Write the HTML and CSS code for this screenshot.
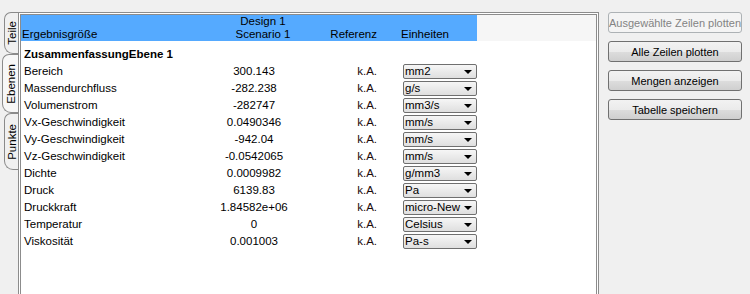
FILE: index.html
```html
<!DOCTYPE html>
<html lang="de">
<head>
    <meta charset="UTF-8">
    <title>Ergebnistabelle</title>
    <link rel="stylesheet" href="styles.css">
</head>
<body>
    <div class="window">
        <!-- Seitliche Reiter -->
        <div class="side-tabs">
            <div class="side-tab tab-teile"><span>Teile</span></div>
            <div class="side-tab tab-ebenen active"><span>Ebenen</span></div>
            <div class="side-tab tab-punkte"><span>Punkte</span></div>
        </div>

        <div class="results">
            <div class="results-head">
                <div class="col-name">Ergebnisgröße</div>
                <div class="col-value">Design 1<br>Scenario 1</div>
                <div class="col-ref">Referenz</div>
                <div class="col-unit">Einheiten</div>
            </div>

            <div class="results-body">
                <div class="row group"><div class="col-name">ZusammenfassungEbene 1</div></div>

                <div class="row">
                    <div class="col-name">Bereich</div>
                    <div class="col-value">300.143</div>
                    <div class="col-ref">k.A.</div>
                    <div class="col-unit"><div class="unit-select"><span>mm2</span><i></i></div></div>
                </div>
                <div class="row">
                    <div class="col-name">Massendurchfluss</div>
                    <div class="col-value">-282.238</div>
                    <div class="col-ref">k.A.</div>
                    <div class="col-unit"><div class="unit-select"><span>g/s</span><i></i></div></div>
                </div>
                <div class="row">
                    <div class="col-name">Volumenstrom</div>
                    <div class="col-value">-282747</div>
                    <div class="col-ref">k.A.</div>
                    <div class="col-unit"><div class="unit-select"><span>mm3/s</span><i></i></div></div>
                </div>
                <div class="row">
                    <div class="col-name">Vx-Geschwindigkeit</div>
                    <div class="col-value">0.0490346</div>
                    <div class="col-ref">k.A.</div>
                    <div class="col-unit"><div class="unit-select"><span>mm/s</span><i></i></div></div>
                </div>
                <div class="row">
                    <div class="col-name">Vy-Geschwindigkeit</div>
                    <div class="col-value">-942.04</div>
                    <div class="col-ref">k.A.</div>
                    <div class="col-unit"><div class="unit-select"><span>mm/s</span><i></i></div></div>
                </div>
                <div class="row">
                    <div class="col-name">Vz-Geschwindigkeit</div>
                    <div class="col-value">-0.0542065</div>
                    <div class="col-ref">k.A.</div>
                    <div class="col-unit"><div class="unit-select"><span>mm/s</span><i></i></div></div>
                </div>
                <div class="row">
                    <div class="col-name">Dichte</div>
                    <div class="col-value">0.0009982</div>
                    <div class="col-ref">k.A.</div>
                    <div class="col-unit"><div class="unit-select"><span>g/mm3</span><i></i></div></div>
                </div>
                <div class="row">
                    <div class="col-name">Druck</div>
                    <div class="col-value">6139.83</div>
                    <div class="col-ref">k.A.</div>
                    <div class="col-unit"><div class="unit-select"><span>Pa</span><i></i></div></div>
                </div>
                <div class="row">
                    <div class="col-name">Druckkraft</div>
                    <div class="col-value">1.84582e+06</div>
                    <div class="col-ref">k.A.</div>
                    <div class="col-unit"><div class="unit-select"><span>micro-New</span><i></i></div></div>
                </div>
                <div class="row">
                    <div class="col-name">Temperatur</div>
                    <div class="col-value">0</div>
                    <div class="col-ref">k.A.</div>
                    <div class="col-unit"><div class="unit-select"><span>Celsius</span><i></i></div></div>
                </div>
                <div class="row">
                    <div class="col-name">Viskosität</div>
                    <div class="col-value">0.001003</div>
                    <div class="col-ref">k.A.</div>
                    <div class="col-unit"><div class="unit-select"><span>Pa-s</span><i></i></div></div>
                </div>
            </div>
        </div>

        <div class="actions">
            <button class="btn" disabled>Ausgewählte Zeilen plotten</button>
            <button class="btn">Alle Zeilen plotten</button>
            <button class="btn">Mengen anzeigen</button>
            <button class="btn">Tabelle speichern</button>
        </div>
    </div>
</body>
</html>
```

FILE: styles.css
```css
body {
    margin: 0;
    background: #f0f0f0;
    font-family: "Liberation Sans", Arial, sans-serif;
    font-size: 11.5px;
    color: #000;
    overflow: hidden;
}

.window {
    box-sizing: border-box;
    height: 294px;
    overflow: hidden;
    display: flex;
    align-items: flex-start;
    padding: 12px 0 0 2px;
}

/* Reiter links */
.side-tabs {
    width: 16px;
    display: flex;
    flex-direction: column;
}

.side-tab {
    box-sizing: border-box;
    margin-left: 2px;
    border: 1px solid #8a8a8a;
    border-right: none;
    border-radius: 7px 0 0 9px;
    background: #f0f0f0;
    display: flex;
    align-items: center;
    justify-content: center;
}

.side-tab span {
    writing-mode: vertical-rl;
    transform: rotate(180deg);
    line-height: 12px;
    white-space: nowrap;
}

.side-tab.active {
    margin-left: 0;
    background: #f7f7f7;
}

.tab-teile { height: 42px; }
.tab-ebenen { height: 59px; }
.tab-punkte { height: 57px; }

/* Tabelle */
.results {
    box-sizing: border-box;
    width: 581px;
    height: 300px;
    border: 3px double #8c8c8c;
    background: #fff;
}

.results-head,
.row {
    display: grid;
    grid-template-columns: 179px 108px 69px 100px;
}

.results-head {
    height: 26px;
    align-items: end;
    line-height: 13px;
    background: linear-gradient(to right, #55aaff 456px, #f6f6f6 456px);
}

.results-head .col-name {
    padding-left: 1px;
}

.results-head .col-value {
    padding-left: 18px;
    text-align: center;
}

.results-head .col-unit {
    padding-left: 24px;
}

.results-body {
    padding-top: 5px;
}

.row {
    height: 17px;
    line-height: 17px;
    align-items: center;
}

.row .col-name {
    padding-left: 3px;
    white-space: nowrap;
}

.row.group .col-name {
    font-weight: bold;
}

.col-value {
    text-align: center;
}

.col-ref {
    text-align: right;
}

.row .col-ref {
    color: #1c0a0a;
}

.unit-select {
    box-sizing: border-box;
    margin-left: 26px;
    width: 74px;
    height: 15px;
    padding: 0 4px 0 1px;
    border: 1px solid #6f6f6f;
    border-radius: 2px;
    background: linear-gradient(#f6f6f6, #dfdfdf);
    display: flex;
    align-items: center;
    gap: 1px;
    line-height: 13px;
}

.unit-select span {
    flex: 1;
    white-space: nowrap;
}

.unit-select i {
    width: 0;
    height: 0;
    border-left: 4px solid transparent;
    border-right: 4px solid transparent;
    border-top: 4px solid #000;
}

/* Knöpfe rechts */
.actions {
    margin-left: 9px;
    width: 134px;
    display: flex;
    flex-direction: column;
    gap: 8px;
}

.btn {
    height: 21px;
    padding: 0;
    border: 1px solid #707070;
    border-radius: 3px;
    background: linear-gradient(#f2f2f2 0%, #ebebeb 50%, #dddddd 51%, #cfcfcf 100%);
    font-family: inherit;
    font-size: 11px;
    color: #000;
    white-space: nowrap;
}

.btn:disabled {
    border-color: #adb2b5;
    background: #f4f4f4;
    color: #838383;
}
```
